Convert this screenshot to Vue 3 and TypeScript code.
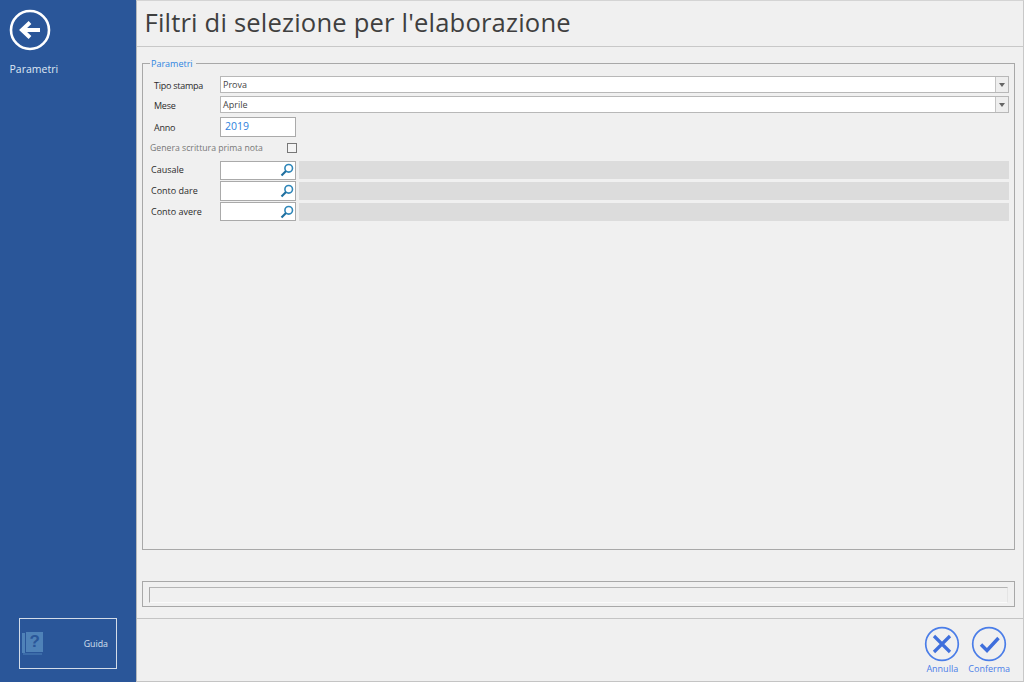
<script setup lang="ts">
const lookups: string[] = ['Causale', 'Conto dare', 'Conto avere']
</script>

<template>
  <div class="app">
    <aside class="side">
      <button class="back" aria-label="Indietro">
        <svg width="42" height="42" viewBox="0 0 42 42">
          <circle cx="21" cy="21" r="19" fill="none" stroke="#fff" stroke-width="2.6" />
          <path d="M31 21H13M21 13.5L13 21l8 7.5" fill="none" stroke="#fff" stroke-width="4" stroke-linejoin="miter" />
        </svg>
      </button>
      <div class="side-title">Parametri</div>
      <div class="guide">
        <svg class="book" width="21" height="23" viewBox="0 0 21 23">
          <path d="M0 1h3v20H0z" fill="#4f82b8" />
          <path d="M4 0h17v20H4z" fill="#4f82b8" />
          <path d="M1 21.5h19v1H1z" fill="#4f82b8" />
        </svg>
        <span class="qm">?</span>
        <span class="guide-label">Guida</span>
      </div>
    </aside>

    <main class="main">
      <header class="head">
        <h1>Filtri di selezione per l'elaborazione</h1>
      </header>

      <section class="body">
        <fieldset class="params">
          <legend>Parametri</legend>
          <div class="row row-select">
            <label class="lbl lbl-in">Tipo stampa</label>
            <div class="select"><span>Prova</span><i class="arrow"></i></div>
          </div>
          <div class="row row-select second">
            <label class="lbl lbl-in">Mese</label>
            <div class="select"><span>Aprile</span><i class="arrow"></i></div>
          </div>
          <div class="row year">
            <label class="lbl lbl-in">Anno</label>
            <div class="input blue">2019</div>
          </div>
          <div class="row check">
            <label class="lbl muted">Genera scrittura prima nota</label>
            <span class="box"></span>
          </div>
          <div class="lookups">
            <div v-for="item in lookups" :key="item" class="row lookup">
              <label class="lbl">{{ item }}</label>
              <div class="input search">
                <svg width="14" height="14" viewBox="0 0 14 14">
                  <circle cx="8.7" cy="5.3" r="3.8" fill="none" stroke="#2f86b8" stroke-width="1.6" />
                  <path d="M6 8L1.500 12.500" stroke="#1f6f9f" stroke-width="2.2" />
                </svg>
              </div>
              <div class="desc"></div>
            </div>
          </div>
        </fieldset>
        <div class="status"><div class="status-in"></div></div>
      </section>

      <footer class="foot">
        <div class="action">
          <svg width="36" height="36" viewBox="0 0 36 36">
            <circle cx="18" cy="18" r="16.3" fill="none" stroke="#4a7de8" stroke-width="1.7" />
            <path d="M10 10l16 16M26 10L10 26" stroke="#3f6fdc" stroke-width="3.2" />
          </svg>
          <span>Annulla</span>
        </div>
        <div class="action">
          <svg width="36" height="36" viewBox="0 0 36 36">
            <circle cx="18" cy="18" r="16.3" fill="none" stroke="#4a7de8" stroke-width="1.7" />
            <path d="M10 18.500l6 6L27.500 12" fill="none" stroke="#3f6fdc" stroke-width="3.4" />
          </svg>
          <span>Conferma</span>
        </div>
      </footer>
    </main>
  </div>
</template>

<style>
html, body { margin: 0; padding: 0; }
</style>

<style scoped>
.app {
  display: flex;
  width: 1024px;
  height: 682px;
  overflow: hidden;
  font-family: "Open Sans", "Noto Sans", sans-serif;
  font-size: 9px;
  color: #2b2b2b;
  background: #f0f0f0;
}
.side {
  width: 136px;
  flex: none;
  box-sizing: border-box;
  background: #2a5699;
  display: flex;
  flex-direction: column;
  color: #fff;
}
.back {
  all: unset;
  display: block;
  margin: 9px 0 0 9px;
  width: 42px;
  height: 42px;
}
.side-title {
  margin: 11px 0 0 9.5px;
  font-size: 10.5px;
  line-height: 15px;
  color: #dfe8f4;
}
.guide {
  position: relative;
  box-sizing: border-box;
  margin: auto 0 13px 18.500px;
  width: 98.500px;
  height: 51px;
  border: 1px solid #d3dce9;
  display: flex;
  align-items: center;
  justify-content: flex-end;
  padding-right: 8px;
}
.book {
  position: absolute;
  left: 2px;
  top: 13px;
}
.qm {
  position: absolute;
  left: 10px;
  top: 11px;
  font: bold 17px/24px "Liberation Sans", sans-serif;
  color: #2a5699;
}
.guide-label {
  font-size: 8.8px;
  color: #d5e0ef;
}
.main {
  flex: 1;
  display: flex;
  flex-direction: column;
  min-width: 0;
  border-left: 1.5px solid #b4b8bc;
  border-right: 1px solid #c8c8c8;
  border-top: 1px solid #d4d4d4;
  border-bottom: 1px solid #c4c4c4;
}
.head {
  height: 46px;
  flex: none;
  box-sizing: border-box;
  border-bottom: 1px solid #c8c8c8;
  padding-left: 7.500px;
}
.head h1 {
  margin: 0;
  font-size: 25.6px;
  font-weight: 400;
  line-height: 43px;
  color: #3f3f3f;
  letter-spacing: 0.18px;
}
.body {
  flex: 1;
  min-height: 0;
  display: flex;
  flex-direction: column;
  padding: 10px 8px 12px 5px;
  border-bottom: 1px solid #c4c4c4;
}
.params {
  margin: 0;
  height: 493px;
  box-sizing: border-box;
  border: 1px solid #a8a8a8;
  padding: 6px 5px 0 8px;
  min-width: 0;
  flex: none;
}
.params legend {
  padding: 0 3px 0 1px;
  margin-left: -1px;
  font-size: 9px;
  line-height: 13px;
  color: #2f86e0;
}
.row {
  display: flex;
  align-items: center;
}
.lbl {
  width: 69px;
  flex: none;
  line-height: 14px;
  white-space: nowrap;
}
.lbl-in {
  padding-left: 3px;
  width: 66px;
  position: relative;
  top: 1px;
  letter-spacing: -0.25px;
}
.select {
  flex: 1;
  height: 17px;
  box-sizing: border-box;
  display: flex;
  align-items: center;
  justify-content: space-between;
  background: #fff;
  border: 1px solid #b8b8b8;
  padding-left: 2px;
  font-size: 9px;
  color: #444;
}
.arrow {
  display: flex;
  align-items: center;
  justify-content: center;
  width: 13px;
  height: 15px;
  background: #eee;
  border-left: 1px solid #c4c4c4;
  box-sizing: border-box;
  position: relative;
}
.arrow::after {
  content: "";
  border: 3px solid transparent;
  border-top: 4px solid #666;
  border-bottom: 0;
}
.second { margin-top: 3px; }
.year { margin-top: 4px; }
.input {
  width: 76px;
  height: 19.500px;
  box-sizing: border-box;
  flex: none;
  background: #fff;
  border: 1px solid #aaa;
}
.blue {
  padding-left: 4px;
  font-size: 10.5px;
  line-height: 16px;
  color: #2f7fdc;
}
.check {
  margin-top: 4px;
  height: 14px;
  position: relative;
}
.muted {
  color: #777;
  font-size: 8.7px;
  width: 137px;
  margin-left: -1px;
}
.box {
  width: 8px;
  height: 8px;
  border: 1px solid #777;
  background: #f4f4f4;
}
.lookups {
  margin-top: 6px;
  display: flex;
  flex-direction: column;
  gap: 1.2px;
}
.lookup { gap: 0; }
.search {
  display: flex;
  align-items: center;
  justify-content: flex-end;
  padding-right: 1px;
}
.desc {
  flex: 1;
  height: 18px;
  margin-left: 3px;
  background: #dcdcdc;
}
.status {
  margin-top: 31px;
  height: 26px;
  box-sizing: border-box;
  border: 1px solid #a8a8a8;
  padding: 5px 6px 3px;
  flex: none;
}
.status-in {
  height: 100%;
  box-sizing: border-box;
  border: 1px solid;
  border-color: #b4b4b4 #e4e4e4 #fafafa #a8a8a8;
}
.foot {
  height: 62px;
  flex: none;
  box-sizing: border-box;
  display: flex;
  justify-content: flex-end;
  gap: 8px;
  padding: 7px 13px 0 0;
}
.action {
  display: flex;
  flex-direction: column;
  align-items: center;
  gap: 0;
  font-size: 9px;
  line-height: 13px;
  color: #4a7de8;
}
</style>
